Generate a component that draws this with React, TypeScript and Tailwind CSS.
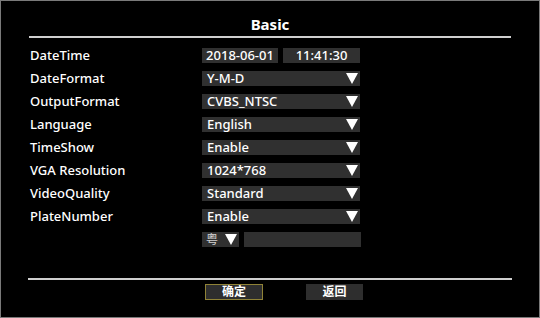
import React from "react";

const Tri = () => (
  <svg width="12" height="11" viewBox="0 0 12 11" className="shrink-0">
    <polygon points="0,0 12,0 6,11" fill="#ffffff" />
  </svg>
);

const rows: { label: string; value: string }[] = [
  { label: "DateFormat", value: "Y-M-D" },
  { label: "OutputFormat", value: "CVBS_NTSC" },
  { label: "Language", value: "English" },
  { label: "TimeShow", value: "Enable" },
  { label: "VGA Resolution", value: "1024*768" },
  { label: "VideoQuality", value: "Standard" },
  { label: "PlateNumber", value: "Enable" },
];

export default function App() {
  const font = { fontFamily: '"Noto Sans", "Noto Sans CJK SC", sans-serif' };
  return (
    <div
      className="w-[540px] h-[318px] bg-black border border-[#7a7a7a] box-border flex flex-col text-white"
      style={font}
    >
      <div className="h-[35px] flex items-end justify-center pb-[4px] text-[15px] font-bold leading-none">
        Basic
      </div>
      <div className="mx-[28px] h-[2px] bg-[#cfcfcf]" />
      <div className="flex flex-col pl-[29px] mt-[10px]">
        <div className="flex items-center h-[15px] mb-[8px]">
          <div className="w-[172px] text-[13px] font-medium leading-none">DateTime</div>
          <div className="w-[76px] h-[15px] bg-[#303030] flex items-center justify-center text-[13px] font-medium leading-none">
            2018-06-01
          </div>
          <div className="w-[77px] h-[15px] ml-[5px] bg-[#303030] flex items-center justify-center text-[13px] font-medium leading-none">
            11:41:30
          </div>
        </div>
        {rows.map((r) => (
          <div key={r.label} className="flex items-center h-[15px] mb-[8px]">
            <div className="w-[172px] text-[13px] font-medium leading-none">{r.label}</div>
            <div className="w-[158px] h-[15px] bg-[#303030] flex items-center justify-between pl-[5px] pr-[2px] text-[13px] font-medium leading-none">
              <span>{r.value}</span>
              <Tri />
            </div>
          </div>
        ))}
        <div className="flex items-center h-[15px]">
          <div className="w-[172px]" />
          <div className="w-[37px] h-[15px] bg-[#303030] flex items-center pl-[4px] gap-[7px] text-[12px] leading-none text-[#d0d0d0]">
            <span>粤</span>
            <Tri />
          </div>
          <div className="w-[117px] h-[15px] ml-[5px] bg-[#303030]" />
        </div>
      </div>
      <div className="mx-[27px] mt-[31px] h-[2px] bg-[#cfcfcf]" />
      <div className="flex mt-[4px] pl-[204px]">
        <div className="w-[58px] h-[16px] bg-[#2e2e2e] border border-[#8f8236] flex items-center justify-center text-[12px] font-bold leading-none">
          确定
        </div>
        <div className="w-[57px] h-[16px] ml-[43px] bg-[#2e2e2e] flex items-center justify-center text-[12px] font-bold leading-none">
          返回
        </div>
      </div>
    </div>
  );
}
